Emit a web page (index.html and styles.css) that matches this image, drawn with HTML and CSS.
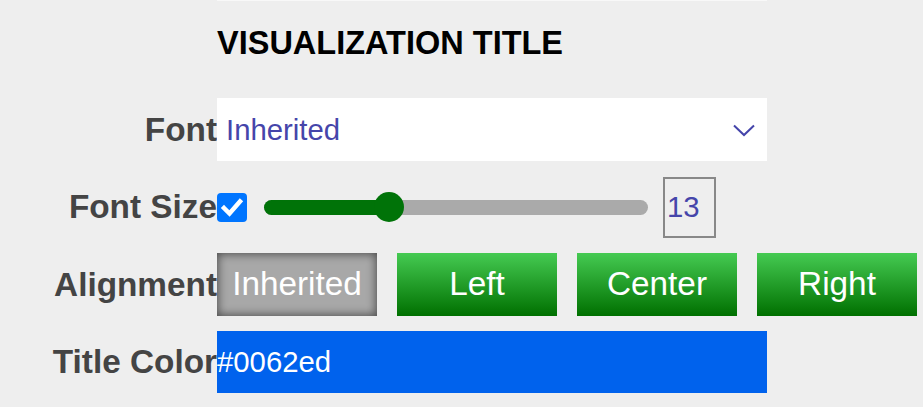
FILE: index.html
```html
<!DOCTYPE html>
<html>
<head>
<meta charset="utf-8">
<link rel="stylesheet" href="styles.css">
</head>
<body>
<div class="panel">
  <div class="strip"></div>
  <div class="title">VISUALIZATION TITLE</div>
  <div class="rows">
    <div class="row">
      <div class="label">Font</div>
      <div class="select">
        <span>Inherited</span>
        <svg class="chev" width="22" height="13" viewBox="0 0 22 13"><polyline points="1,1.5 11,11 21,1.5" fill="none" stroke="#4444aa" stroke-width="2"/></svg>
      </div>
    </div>
    <div class="row">
      <div class="label">Font Size</div>
      <div class="check">
        <svg width="30" height="29" viewBox="0 0 30 29"><polyline points="7,15 12.5,20.5 23,8.5" fill="none" stroke="#fff" stroke-width="4.5" stroke-linecap="square"/></svg>
      </div>
      <div class="slider">
        <div class="fill" style="width:125px"></div>
        <div class="thumb" style="left:110px"></div>
      </div>
      <div class="num">13</div>
    </div>
    <div class="row">
      <div class="label">Alignment</div>
      <div class="buttons">
        <div class="btn btn-active">Inherited</div>
        <div class="btn">Left</div>
        <div class="btn">Center</div>
        <div class="btn">Right</div>
      </div>
    </div>
    <div class="row">
      <div class="label">Title Color</div>
      <div class="color">#0062ed</div>
    </div>
  </div>
</div>
</body>
</html>
```

FILE: styles.css
```css
html, body {
  margin: 0;
  padding: 0;
  background: #eeeeee;
  font-family: "Liberation Sans", Arial, sans-serif;
}
.panel {
  width: 923px;
  height: 407px;
  overflow: hidden;
}
.strip {
  margin-left: 217px;
  width: 550px;
  height: 1px;
  background: #f8f8f8;
}
.title {
  margin: 26px 0 0 217px;
  font-size: 32.5px;
  line-height: 32px;
  font-weight: bold;
  color: #000;
}
.rows {
  margin-top: 39px;
  display: flex;
  flex-direction: column;
  gap: 14.5px;
}
.row {
  display: flex;
  align-items: center;
  height: 63px;
}
.label {
  width: 217px;
  flex: none;
  text-align: right;
  font-size: 33.33px;
  font-weight: bold;
  color: #444444;
  white-space: nowrap;
}
.select {
  width: 550px;
  height: 63px;
  box-sizing: border-box;
  background: #ffffff;
  display: flex;
  align-items: center;
  justify-content: space-between;
  padding: 0 12px 0 9px;
  font-size: 29.33px;
  color: #4545aa;
}
.chev {
  display: block;
  margin-top: 1px;
}
.check {
  width: 30px;
  height: 29px;
  background: #0075ff;
  border-radius: 4px;
  flex: none;
}
.check svg {
  display: block;
}
.slider {
  position: relative;
  margin-left: 17px;
  width: 384px;
  height: 15px;
  background: #aaaaaa;
  border-radius: 8px;
  flex: none;
}
.fill {
  height: 15px;
  background: #007308;
  border-radius: 8px 0 0 8px;
}
.thumb {
  position: absolute;
  top: -7.5px;
  width: 30px;
  height: 30px;
  border-radius: 50%;
  background: #007308;
}
.num {
  margin-left: 15px;
  width: 53px;
  height: 61px;
  box-sizing: border-box;
  border: 2px solid #888888;
  display: flex;
  align-items: center;
  padding-left: 2px;
  font-size: 29.33px;
  color: #4545aa;
  flex: none;
}
.buttons {
  display: flex;
  gap: 20px;
}
.btn {
  width: 160px;
  height: 63px;
  display: flex;
  align-items: center;
  justify-content: center;
  padding-bottom: 2px;
  box-sizing: border-box;
  font-size: 33.33px;
  color: #ffffff;
  background: linear-gradient(to bottom, #45ca52, #007000);
}
.btn-active {
  background: #a8a8a8;
  box-shadow: inset 0 0 10px 1px rgba(0, 0, 0, 0.55);
}
.color {
  width: 550px;
  height: 62px;
  background: #0062ed;
  color: #ffffff;
  font-size: 29.33px;
  display: flex;
  align-items: center;
}
```
